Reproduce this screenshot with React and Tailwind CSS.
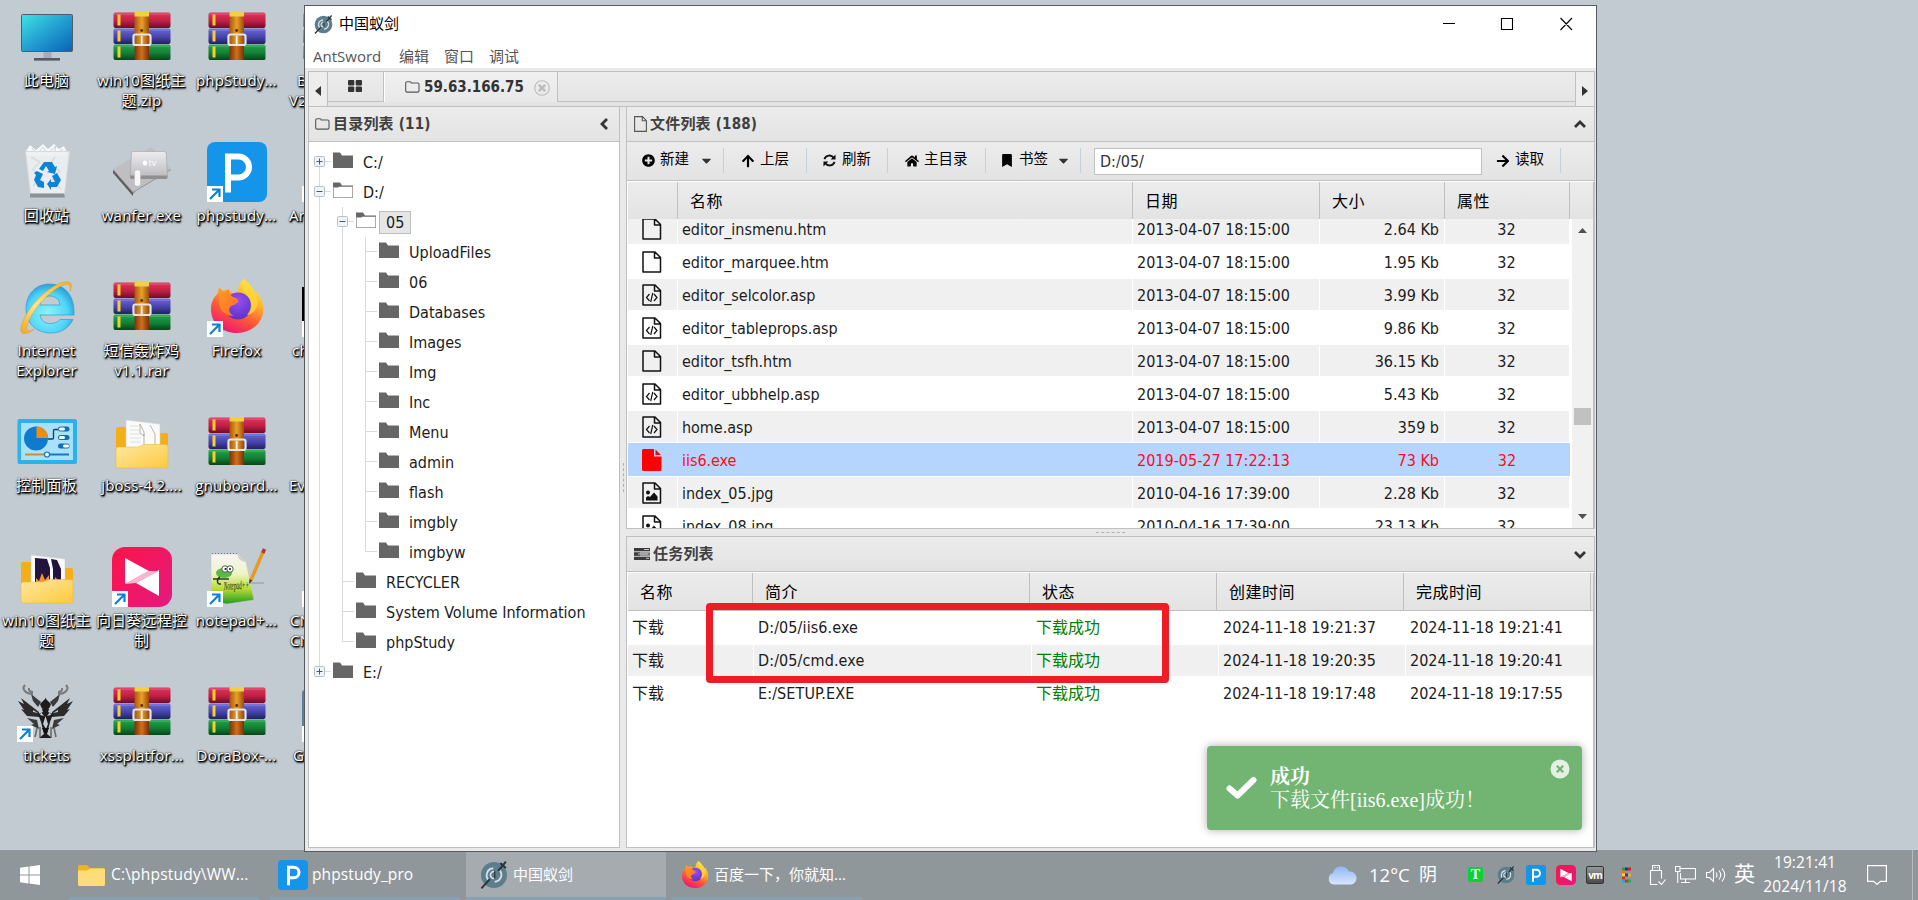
import React from "react";
import { FaPlusCircle, FaArrowUp, FaHome, FaBookmark, FaArrowRight, FaCaretDown } from "react-icons/fa";

const DUI = "font-[family-name:'DejaVu_Sans_Condensed','DejaVu_Sans','Noto_Sans_CJK_SC',sans-serif]";

/* ---------- desktop artwork ---------- */

function Rar() {
  const books = [
    { y: 13, a: "#e0355c", b: "#c01f45", c: "#6e0c26" },
    { y: 29, a: "#6a68d8", b: "#4644a8", c: "#232063" },
    { y: 44, a: "#25a548", b: "#128035", c: "#07451a" },
  ];
  return (
    <svg viewBox="0 0 60 60" className="size-[60px]">
      <defs>
        {books.map((k, i) => (
          <linearGradient key={i} id={"bk" + i} x1="0" y1="0" x2="0" y2="1">
            <stop offset="0" stopColor={k.a} />
            <stop offset="0.55" stopColor={k.b} />
            <stop offset="1" stopColor={k.c} />
          </linearGradient>
        ))}
        <linearGradient id="belt" x1="0" y1="0" x2="1" y2="0">
          <stop offset="0" stopColor="#a8560c" />
          <stop offset="0.5" stopColor="#e9a02a" />
          <stop offset="1" stopColor="#9a4c0a" />
        </linearGradient>
        <linearGradient id="belt2" x1="0" y1="0" x2="1" y2="0">
          <stop offset="0" stopColor="#7d3208" />
          <stop offset="0.5" stopColor="#d0701c" />
          <stop offset="1" stopColor="#7a3008" />
        </linearGradient>
      </defs>
      <rect x="2" y="51" width="57" height="2" rx="1" fill="#00000030" />
      {books.map((k, i) => (
        <g key={i}>
          <rect x="1.5" y={5.5 + i * 16} width="57" height="15.5" rx="2" fill={"url(#bk" + i + ")"} />
          <rect x="5.5" y={7.5 + i * 16} width="3" height="11" fill="#f5cf2c" />
          <rect x="2" y={6.5 + i * 16} width="56" height="1.2" fill="#ffffff30" />
        </g>
      ))}
      <rect x="22.5" y="5" width="14.5" height="34" fill="url(#belt)" />
      <rect x="22.5" y="5" width="14.5" height="4.5" fill="#f3cf45" />
      <rect x="22.5" y="37" width="14.5" height="16" fill="url(#belt2)" />
      <circle cx="29.7" cy="23.5" r="1.4" fill="#5c2c06" />
      <rect x="21.5" y="27.5" width="17" height="10.5" rx="2" fill="none" stroke="#e4e6ea" strokeWidth="2.2" />
      <path d="M29.7 29v8" stroke="#f1f2f5" strokeWidth="1.8" />
    </svg>
  );
}

function Monitor() {
  return (
    <svg viewBox="0 0 60 60" className="size-[60px]">
      <defs>
        <linearGradient id="mon" x1="0" y1="0" x2="1" y2="1">
          <stop offset="0" stopColor="#3fe3e6" />
          <stop offset="0.5" stopColor="#239fd2" />
          <stop offset="1" stopColor="#0763b5" />
        </linearGradient>
      </defs>
      <rect x="4.5" y="7.5" width="51" height="37" rx="1" fill="url(#mon)" stroke="#555b66" strokeWidth="1" />
      <rect x="26.5" y="45" width="8" height="7" fill="#a8abb8" />
      <rect x="17" y="51" width="26" height="2.6" fill="#555a68" />
    </svg>
  );
}

function Recycle() {
  return (
    <svg viewBox="0 0 60 60" className="size-[60px]">
      <path d="M9 9 13 3l6 5 7-6 5 5 6-5 5 5 5-3 3 6-1 4H9z" fill="#f6f8f9" />
      <path d="m15 6 5 6 6-7 4 7 9-8-2 9 9-6" fill="none" stroke="#cbd2d6" />
      <path d="M8.500 9.500h44L47.500 52h-34z" fill="#eef1f3" fillOpacity="0.9" stroke="#d5dadd" />
      <path d="m14 15 9 5-7 7 8 9-8 8m22-29-6 8 11 6-8 9 9 9" fill="none" stroke="#d6dcdf" strokeWidth="1.5" />
      <path d="M13 51.500h34l1 4H13z" fill="#8b9297" />
      <g fill="#0b84d8">
        <path d="m22 27 5-7 8 0 3 5 2-1-2 8-8-2 2-1-3-5-3 5z" />
        <path d="m20 29 6 3-3 6 4 2v6l-6-1-4-7 2-5-2-2z" />
        <path d="m30 42 4-5v3h4l-3-6 5-3 4 7-4 7h-6v3z" />
      </g>
    </svg>
  );
}

function AppleTv() {
  return (
    <svg viewBox="0 0 60 60" className="size-[60px]">
      <defs>
        <linearGradient id="atv" x1="0" y1="0" x2="0" y2="1">
          <stop offset="0" stopColor="#ededf0" />
          <stop offset="1" stopColor="#bcbcc0" />
        </linearGradient>
      </defs>
      <path d="M1 29 39 6 59 28 24 49 20 53z" fill="#8d8d8f" />
      <path d="M1 27 39 5 59 27 21 50z" fill="#bfbfc1" />
      <path d="m1 28 20 23v3L1 31z" fill="#5b5b5d" />
      <path d="M21 9.500h31q2 0 2.200 2L55.500 33q0 2-2 2H20q-2 0-1.800-2L19.500 11q.200-1.500 1.500-1.500z" fill="url(#atv)" stroke="#a2a2a6" strokeWidth="0.600" />
      <path d="M18 33.500h37.500v2q0 1.500-2 1.500H20q-2 0-2-1.500z" fill="#8f8f92" />
      <rect x="22.500" y="28" width="6" height="16" rx="2" fill="#f7f7f8" stroke="#b6b6b8" strokeWidth="0.500" />
      <ellipse cx="33" cy="21" rx="2.200" ry="2.500" fill="#fff" />
      <text x="36.500" y="24" fontSize="9" fontFamily="Open Sans" fill="#fff">tv</text>
    </svg>
  );
}

function PTile({ className }) {
  return (
    <svg viewBox="0 0 60 60" className={className}>
      <rect width="60" height="60" rx="8" fill="#1595e9" />
      <path d="M21 50.500V14.500h10.500a10.500 10.500 0 0 1 0 21H21" fill="none" stroke="#fff" strokeWidth="6" />
    </svg>
  );
}

function InternetExplorer() {
  return (
    <svg viewBox="0 0 60 60" className="size-[60px]">
      <defs>
        <radialGradient id="ie" cx="0.45" cy="0.6" r="0.6">
          <stop offset="0" stopColor="#8df3ff" />
          <stop offset="0.7" stopColor="#4ed4f8" />
          <stop offset="1" stopColor="#2b9fd9" />
        </radialGradient>
        <linearGradient id="ieRing" x1="0" y1="1" x2="1" y2="0">
          <stop offset="0" stopColor="#f0a81c" />
          <stop offset="0.4" stopColor="#ffe38a" />
          <stop offset="1" stopColor="#f5b21e" />
        </linearGradient>
      </defs>
      <path
        d="M32.500 7C47 7 57 18 57 34.500v3.500H23c1 6 5 8.500 10.500 8.500 4 0 7-1 9.500-4h13C52 51 44 56 34 56 19 56 9 46 9 32 9 17 19 7 32.500 7zM23 28h20c-.500-5.500-4.500-9-10-9s-9.500 3.500-10 9z"
        fill="url(#ie)"
        stroke="#3b9ac9"
        strokeWidth="0.700"
      />
      <path
        d="M8 40C3 49 2 56 7 56.500c3 .200 7-1.500 10-4-7 3-9 .500-6-7C16 33 30 16 44 9c8-4 10-1 9 5 3-7 1-10-5-9C35 7 16 24 8 40z"
        fill="url(#ieRing)"
        stroke="#d9921a"
        strokeWidth="0.400"
      />
    </svg>
  );
}

function Firefox({ className }) {
  return (
    <svg viewBox="0 0 60 60" className={className}>
      <defs>
        <linearGradient id="ff" x1="0.8" y1="0" x2="0.3" y2="1">
          <stop offset="0" stopColor="#fff04a" />
          <stop offset="0.35" stopColor="#ffb22e" />
          <stop offset="0.65" stopColor="#ff5a35" />
          <stop offset="1" stopColor="#ee1276" />
        </linearGradient>
        <radialGradient id="ffc" cx="0.5" cy="0.3" r="0.7">
          <stop offset="0" stopColor="#9a4df0" />
          <stop offset="1" stopColor="#5a33c8" />
        </radialGradient>
        <linearGradient id="fff" x1="0" y1="0" x2="1" y2="1">
          <stop offset="0" stopColor="#ff9a20" />
          <stop offset="1" stopColor="#ff6a2c" />
        </linearGradient>
      </defs>
      <path d="M37 2c5 4 9 9 12 15l1-2c4 5 6.500 11 6.500 17.500A26 24 0 0 1 30 56C15 56 4 46 4 32c0-7 3-12 7-16l1-6 4 4 5-2 6 5 4-3c0-5 2-9 6-12z" fill="url(#ff)" />
      <circle cx="31" cy="29" r="13.500" fill="url(#ffc)" />
      <path d="M13 11.500 17 16l5-4c-.200 4 1 6 4 8 4 1 6 3 5 5-2 3-6 3-8 5-2 3 0 7 4 9-9 0-15-6-15-14 0-5 1-9 1-13.500z" fill="url(#fff)" />
      <path d="M37 2c-4 8 0 12 4 17 4 6 4 13-1 19 9-2 13-10 9-21-3-6-7-11-12-15z" fill="#ffd93a" fillOpacity="0.750" />
    </svg>
  );
}

function ControlPanel() {
  return (
    <svg viewBox="0 0 60 60" className="size-[60px]">
      <rect x="0.500" y="7" width="59.500" height="45" rx="2" fill="#2bb1ec" />
      <rect x="4" y="11" width="52" height="37" fill="#a9e2f8" />
      <circle cx="19" cy="26.500" r="12" fill="#0f7bd0" />
      <path d="M19.500 26V14.500A11.500 11.500 0 0 1 31 26z" fill="#f08c13" />
      <path d="M31 27h4.500q1 0 1-1v-7.500q0-1 1-1H41" fill="none" stroke="#173e63" strokeWidth="1.300" />
      <g fill="#0f6fb8">
        <rect x="41" y="14.500" width="11.500" height="5" rx="2.500" />
        <rect x="41" y="23" width="11.500" height="5" rx="2.500" />
        <rect x="41" y="31.500" width="11.500" height="5" rx="2.500" />
      </g>
      <g fill="#fff">
        <rect x="42" y="15.500" width="6" height="3" rx="1.500" />
        <rect x="42" y="24" width="6" height="3" rx="1.500" />
        <rect x="46" y="32.500" width="6" height="3" rx="1.500" />
      </g>
      <path d="M8 42.500h22" stroke="#d8892c" strokeWidth="2" />
      <path d="M30 42.500h22" stroke="#1179c4" strokeWidth="2" />
      <circle cx="30" cy="42.500" r="2.500" fill="#fff" stroke="#1470b5" strokeWidth="1.200" />
    </svg>
  );
}

function Folder({ photos }) {
  return (
    <svg viewBox="0 0 60 60" className="size-[60px]">
      <defs>
        <linearGradient id="fold" x1="0" y1="0" x2="1" y2="1">
          <stop offset="0" stopColor="#fde7a2" />
          <stop offset="1" stopColor="#fdca3c" />
        </linearGradient>
      </defs>
      <path d="M4 17q0-2 2-2h14l5 6h29q2 0 2 2v20H4z" fill="#f4ae17" />
      <path d="m14 8 34 4v30H14z" fill="#fafafa" stroke="#d0d0d0" strokeWidth="0.600" />
      {photos ? (
        <g>
          <path d="m18 11 12 1 3 9v19H18z" fill="#21153f" />
          <path d="m34 12 6 1 4 9v18H36V22z" fill="#21153f" />
          <path d="M19 40v-9l3 3 3-8 3 7 4-5v12zM37 40l1-10 4 4v6z" fill="#f5922c" />
          <path d="m24 40 2-6 3 6z" fill="#ffd84a" />
        </g>
      ) : (
        <g fill="none" stroke="#a9a294" strokeWidth="0.800">
          <path d="m28 12 4 8v4l-4-3zM38 13l5 9v17M32 22v17" />
          <path d="M18 14h8M18 18h10M18 22h10M18 26h11M18 30h11" stroke="#d8d8d8" />
        </g>
      )}
      <path d="M4 38q0-3 2.500-3H26l6-2.500h22q2 0 2 2V54q0 2-2 2H6q-2 0-2-2z" fill="url(#fold)" stroke="#e9b437" strokeWidth="0.500" />
    </svg>
  );
}

function Sunlogin({ className }) {
  return (
    <svg viewBox="0 0 60 60" className={className}>
      <defs>
        <linearGradient id="sun" x1="0" y1="0" x2="1" y2="1">
          <stop offset="0" stopColor="#fd1448" />
          <stop offset="1" stopColor="#e21a80" />
        </linearGradient>
      </defs>
      <rect width="60" height="60" rx="13" fill="url(#sun)" />
      <path d="M13 11v26l24-13z" fill="#fff" />
      <path d="M47 49V23L24 36z" fill="#fff" />
      <path d="M13 37 36 24h11L24 36z" fill="#fbb4cf" />
    </svg>
  );
}

function Notepad() {
  return (
    <svg viewBox="0 0 60 60" className="size-[60px]">
      <defs>
        <linearGradient id="np" x1="0" y1="0" x2="0" y2="1">
          <stop offset="0" stopColor="#f6f6f6" />
          <stop offset="0.4" stopColor="#eef4c6" />
          <stop offset="0.7" stopColor="#b6dc35" />
          <stop offset="1" stopColor="#1f9a22" />
        </linearGradient>
      </defs>
      <path d="M4 7h27l8 8 8 38-27 4-16-2z" fill="url(#np)" stroke="#c9c9c9" strokeWidth="0.600" />
      <path d="M30 7q2 8 9 8z" fill="#cfcfcf" />
      <path d="M5 6.500h26" stroke="#777" strokeWidth="1.200" strokeDasharray="1 2" />
      <ellipse cx="17" cy="26" rx="8" ry="5" fill="#59b847" />
      <path d="M6 32h16M13 30c-4 2-3 8 1 7" fill="none" stroke="#2d3a24" strokeWidth="1.500" />
      <circle cx="18" cy="22" r="3.200" fill="#fff" stroke="#333" strokeWidth="0.800" />
      <circle cx="23" cy="22" r="3.200" fill="#fff" stroke="#333" strokeWidth="0.800" />
      <circle cx="18.500" cy="22" r="1" fill="#111" />
      <circle cx="23" cy="22" r="1" fill="#111" />
      <text x="17" y="43" fontSize="12" fontStyle="italic" fontFamily="Liberation Serif" fill="#222" textLength="25" lengthAdjust="spacingAndGlyphs" transform="rotate(-3 17 43)">Notepad++</text>
      <path d="M56 5 44 33" stroke="#e69b1e" strokeWidth="3.500" />
      <path d="M57.500 2 55.800 6" stroke="#b03838" strokeWidth="3.500" />
      <path d="m42.600 32 2.800 1.400-3.400 3.400z" fill="#333" />
      <path d="M42 36h15" stroke="#00000022" strokeWidth="2" />
    </svg>
  );
}

function Dragon() {
  const half = (
    <g>
      <path d="M22 30 4 16l3 6-6-3 6 9-3-1 6 7 12 1z" fill="#2c2b2b" />
      <path d="M24 20 14 12l2 7 5 6zM20 38l-10-2 7 6-3 1 8 4z" fill="#3b3a3a" />
      <path d="M16 12C9 12 4 7 8 3m4 3c-1 3 2 4 4 4" fill="none" stroke="#77797b" strokeWidth="2" />
      <path d="m29 16-6 6 3 8-5 2 3 8 3 12-5 4 7 0z" fill="#1d1b1b" />
      <path d="m20 46-2 9m5-10 0 10" stroke="#6a6a6b" strokeWidth="1.600" />
    </g>
  );
  return (
    <svg viewBox="0 0 60 60" className="size-[60px]">
      {half}
      <g transform="translate(57 0) scale(-1 1)">{half}</g>
      <path d="m24 30 3 4-4-1zM33 30l-3 4 4-1zM26 42l2.500-8 2.500 8-2 5zM22 24l4 3-3 0zM35 24l-4 3 3 0zM16 28l5 3-5-1zM41 28l-5 3 5-1z" fill="#c1cbd1" />
      <path d="M25 46h7l-2 5h-3z" fill="#111" />
    </svg>
  );
}

function AntLogo({ className }) {
  return (
    <svg viewBox="0 0 20 20" className={className}>
      <circle cx="10" cy="10" r="9.300" fill="#5e7d8c" />
      <path d="M6 13.500a5 5 0 0 1 3.500-8.300M14 6.500a5 5 0 0 1-3.500 8.300" fill="none" stroke="#d7e0e4" strokeWidth="1.300" />
      <path d="M10 7.500a2.300 2.300 0 0 0 0 5" fill="none" stroke="#d7e0e4" strokeWidth="1.200" />
      <path d="M10.500 7.500v5" stroke="#2b3a42" strokeWidth="1" />
      <path d="M1 19.500 7 13M13 7l5.500-6.500M14.500 1.500l4 3.500" stroke="#27343b" strokeWidth="1.400" />
    </svg>
  );
}

function Shortcut() {
  return (
    <svg viewBox="0 0 16 16" className="absolute bottom-0 left-0 size-[16px]">
      <rect width="16" height="16" fill="#fff" />
      <path d="M3 13 11.500 4.500M5 3.500h7.500V11" fill="none" stroke="#0c80d8" strokeWidth="2.200" />
    </svg>
  );
}

const columns = [
  [
    { icon: <Monitor />, label: ["此电脑"] },
    { icon: <Recycle />, label: ["回收站"] },
    { icon: <InternetExplorer />, label: ["Internet", "Explorer"] },
    { icon: <ControlPanel />, label: ["控制面板"] },
    { icon: <Folder photos />, label: ["win10图纸主", "题"] },
    { icon: <Dragon />, label: ["tickets"], link: true },
  ],
  [
    { icon: <Rar />, label: ["win10图纸主", "题.zip"] },
    { icon: <AppleTv />, label: ["wanfer.exe"] },
    { icon: <Rar />, label: ["短信轰炸鸡", "v1.1.rar"] },
    { icon: <Folder />, label: ["jboss-4.2...."] },
    { icon: <Sunlogin className="size-[60px]" />, label: ["向日葵远程控", "制"], link: true },
    { icon: <Rar />, label: ["xssplatfor..."] },
  ],
  [
    { icon: <Rar />, label: ["phpStudy..."] },
    { icon: <PTile className="size-[60px]" />, label: ["phpstudy..."], link: true },
    { icon: <Firefox className="size-[60px]" />, label: ["Firefox"], link: true },
    { icon: <Rar />, label: ["gnuboard..."] },
    { icon: <Notepad />, label: ["notepad+..."], link: true },
    { icon: <Rar />, label: ["DoraBox-..."] },
  ],
];

const fourth = [
  { icon: <Rar />, label: ["B", "V2"], pad: ["pl-[13px]", "pl-[5px]"] },
  { icon: null, label: ["Ar"], pad: ["pl-[5px]"], link: true },
  { icon: <div className="h-[40px] w-full bg-black" />, label: ["ch"], pad: ["pl-[8px]"], link: true },
  { icon: null, label: ["Ev"], pad: ["pl-[5px]"] },
  { icon: null, label: ["CN", "CN"], pad: ["pl-[6px]", "pl-[6px]"], link: true },
  { icon: <div className="h-[44px] w-full rounded-[3px] bg-[#5e7f9c]" />, label: ["G"], pad: ["pl-[9px]"], link: true },
];

const labelText =
  "text-[15px] leading-[20px] tracking-[0.2px] whitespace-nowrap text-white [text-shadow:1px_1px_1px_#000,1px_1px_2px_#000,0_0_2px_#000,1px_2px_2px_#000a]";

function DesktopItem({ item }) {
  return (
    <div className="flex h-[135px] w-[95px] flex-col items-center">
      <div className="relative flex size-[60px] items-center justify-center">
        {item.icon}
        {item.link && <Shortcut />}
      </div>
      <div className="mt-[3px] flex w-full flex-col">
        {item.label.map((t, i) => (
          <span key={i} className={(item.pad ? item.pad[i] : "text-center") + " " + labelText}>
            {t}
          </span>
        ))}
      </div>
    </div>
  );
}

/* ---------- small window glyphs ---------- */

function FolderOutline() {
  return (
    <svg viewBox="0 0 15 12" className="h-[12px] w-[15px] shrink-0">
      <path d="M.700 2q0-1.300 1.300-1.300h3q1.200 0 1.200 1.300h6.500q1.300 0 1.300 1.300v6.500q0 1.300-1.300 1.300H2Q.700 11.100.700 9.800z" fill="none" stroke="#555" strokeWidth="1.100" />
    </svg>
  );
}

function FileOutline() {
  return (
    <svg viewBox="0 0 13 16" className="h-[16px] w-[13px] shrink-0">
      <path d="M.600.600h7.900l3.900 4v10.800H.600zM8.300.800v4h4" fill="none" stroke="#555" strokeWidth="1.100" />
    </svg>
  );
}

function FileGlyph({ kind }) {
  if (kind === "red")
    return (
      <svg viewBox="0 0 20 22" className="h-[22px] w-[20px]">
        <path d="M1.500 0H12v7.500h7.500v13q0 1.500-1.500 1.500H1.500Q0 22 0 20.500v-19Q0 0 1.500 0zM13.500.500l5.500 5.500h-5.500z" fill="#f00" />
      </svg>
    );
  return (
    <svg viewBox="0 0 20 22" className="h-[22px] w-[20px]">
      <path d="M1 1h12l5.500 5.500V21H1zM12.500 1v6h6" fill="none" stroke="#111" strokeWidth="1.500" strokeLinejoin="round" />
      {kind === "asp" && <path d="m7.500 10-3 3.500 3 3.500M12 10l3 3.500-3 3.500M10.800 8.800 8.700 18" fill="none" stroke="#111" strokeWidth="1.200" />}
      {kind === "jpg" && (
        <g fill="#111">
          <circle cx="6" cy="10.500" r="2" />
          <path d="M4 18.500v-3l2-1.500 2 1 4-4.500 3.500 4v4z" />
        </g>
      )}
    </svg>
  );
}

function TreeFolder({ open }) {
  return (
    <svg viewBox="0 0 20 16" className="h-[16px] w-[20px] shrink-0">
      <path d="M0 .500h7l2 3h11V16H0z" fill="#666" />
      {open && <path d="M1 5.500h4l1.500-.800H19V15H1z" fill="#fff" />}
      {open && <path d="M.500 5v10.500h19V4.500" fill="none" stroke="#aaa" />}
    </svg>
  );
}

function TreeCell({ kind }) {
  const up = kind !== "none" && kind !== "plusTop";
  const down = !["none", "end", "plusEnd"].includes(kind);
  const box = kind.startsWith("plus") || kind.startsWith("minus");
  const stub = box || kind === "tee" || kind === "end";
  return (
    <svg viewBox="0 0 23 30" className="h-[30px] w-[23px] shrink-0">
      <g stroke="#dadada">
        {up && <path d="M10.500 0v15" />}
        {down && <path d="M10.500 15v15" />}
        {stub && <path d="M10 14.500h12" />}
      </g>
      {box && (
        <g>
          <rect x="5.500" y="9.500" width="10" height="10" rx="1" fill="#f0f4f7" stroke="#b5c0c9" />
          <path d="M7.500 14.500h6" stroke="#47596a" />
          {kind.startsWith("plus") && <path d="M10.500 11.500v6" stroke="#47596a" />}
        </g>
      )}
    </svg>
  );
}

const tree = [
  { cells: ["plusTop"], name: "C:/" },
  { cells: ["minus"], name: "D:/", open: true },
  { cells: ["line", "minus"], name: "05", open: true, selected: true },
  ...["UploadFiles", "06", "Databases", "Images", "Img", "Inc", "Menu", "admin", "flash", "imgbly"].map((name) => ({
    cells: ["line", "line", "tee"],
    name,
  })),
  { cells: ["line", "line", "end"], name: "imgbyw" },
  { cells: ["line", "tee"], name: "RECYCLER" },
  { cells: ["line", "tee"], name: "System Volume Information" },
  { cells: ["line", "end"], name: "phpStudy" },
  { cells: ["plusEnd"], name: "E:/" },
];

const d13 = "2013-04-07 18:15:00";
const d10 = "2010-04-16 17:39:00";
const files = [
  ["htm", "editor_insmenu.htm", d13, "2.64 Kb"],
  ["htm", "editor_marquee.htm", d13, "1.95 Kb"],
  ["asp", "editor_selcolor.asp", d13, "3.99 Kb"],
  ["asp", "editor_tableprops.asp", d13, "9.86 Kb"],
  ["htm", "editor_tsfh.htm", d13, "36.15 Kb"],
  ["asp", "editor_ubbhelp.asp", d13, "5.43 Kb"],
  ["asp", "home.asp", d13, "359 b"],
  ["red", "iis6.exe", "2019-05-27 17:22:13", "73 Kb"],
  ["jpg", "index_05.jpg", d10, "2.28 Kb"],
  ["jpg", "index_08.jpg", d10, "23.13 Kb"],
];

const tasks = [
  ["D:/05/iis6.exe", "2024-11-18 19:21:37", "2024-11-18 19:21:41"],
  ["D:/05/cmd.exe", "2024-11-18 19:20:35", "2024-11-18 19:20:41"],
  ["E:/SETUP.EXE", "2024-11-18 19:17:48", "2024-11-18 19:17:55"],
];

const grad = "bg-linear-to-b from-[#ececec] to-[#e3e3e3]";

function HeadCell({ className, children }) {
  return (
    <div className={"flex items-center border-r border-[#c0c0c0] pt-[2px] pl-[12px] text-[16px] tracking-[0.5px] text-black " + className}>
      {children}
    </div>
  );
}

function Chevron({ d, className }) {
  return (
    <svg viewBox="0 0 12 12" className={"size-[12px] " + className}>
      <path d={d} fill="none" stroke="#333" strokeWidth="2.800" />
    </svg>
  );
}

function PanelHead({ icon, title, chevron, className }) {
  return (
    <div className={"flex h-[35px] shrink-0 items-center border-b border-[#c0c0c0] pl-[6px] " + grad + " " + (className || "")}>
      {icon}
      <span className="ml-[3px] text-[15px] font-bold tracking-[0.2px] whitespace-nowrap text-[#404040]">{title}</span>
      <div className="grow" />
      {chevron}
    </div>
  );
}

function Sep({ className }) {
  return <div className={"-mt-px h-[25px] w-px shrink-0 bg-[#c2d2dd] " + className} />;
}

function Word({ className, children }) {
  return <span className={"pb-[2px] " + className}>{children}</span>;
}

function FileRow({ row, index }) {
  const [kind, name, date, size] = row;
  const sel = kind === "red";
  const bg = index % 2 === 0 ? "bg-[#f0f0f0]" : "bg-white";
  const cell = sel ? "flex items-center border-r border-transparent" : "my-px flex items-center border-r border-white " + bg;
  return (
    <div className={"flex h-[33px] shrink-0 " + (sel ? "w-[942px] bg-[#b5d5ff] text-[#fb0d1b]" : "w-[941px] text-[#1c1c1c]")}>
      <div className={cell + " w-[50px] pl-[14px]"}>
        <FileGlyph kind={kind} />
      </div>
      <div className={cell + " w-[455px] pt-[2px] pl-[4px] tracking-[-0.03px]"}>{name}</div>
      <div className={cell + " w-[187px] pt-[2px] pl-[4px]"}>{date}</div>
      <div className={cell + " w-[125px] justify-end pt-[2px] pr-[5px]"}>{size}</div>
      <div className={cell + " grow justify-center border-r-0 pt-[2px] pr-px"}>32</div>
    </div>
  );
}

function AntSword() {
  return (
    <div className="absolute top-[5px] left-[304px] flex h-[847px] w-[1293px] flex-col border border-[#555b5f] bg-[#e9e9e9]">
      {/* title bar */}
      <div className="flex h-[38px] shrink-0 items-center bg-white pb-[2px] pl-[9px]">
        <AntLogo className="size-[19px]" />
        <span className="ml-[6px] text-[15px] text-black">中国蚁剑</span>
        <div className="grow" />
        <svg viewBox="0 0 130 14" className="mr-[23px] h-[14px] w-[130px]">
          <g fill="none" stroke="#000" strokeWidth="1.100">
            <path d="M0 6.500h12M58.500 1.500h11v11h-11zM117.500 1l11.500 12M129 1l-11.500 12" />
          </g>
        </svg>
      </div>
      {/* menu */}
      <div className="flex h-[24px] shrink-0 gap-[16px] bg-white pt-px pl-[8px] text-[15px] leading-[23px] whitespace-nowrap text-[#555] font-[family-name:'Open_Sans','Noto_Sans_CJK_SC',sans-serif]">
        <span className="w-[70px]">AntSword</span>
        <span className="w-[29px]">编辑</span>
        <span className="w-[29px]">窗口</span>
        <span className="w-[30px]">调试</span>
      </div>
      {/* workspace */}
      <div className="mt-[3px] mr-px mb-[3px] ml-[3px] flex min-h-0 grow flex-col">
        <div className={"flex h-[36px] shrink-0 border border-[#c0c0c0] " + grad}>
          <div className="flex w-[19px] items-center border-r border-[#c0c0c0] bg-[#ededed] pt-[3px] pl-[6px]">
            <svg viewBox="0 0 6 10" className="h-[10px] w-[6px]"><path d="M6 0v10L0 5z" fill="#333" /></svg>
          </div>
          <div className="flex h-[30px] w-[56px] justify-center border-r border-b border-[#c0c0c0] pt-[8px] pr-px">
            <svg viewBox="0 0 14 12" className="h-[12px] w-[14px]">
              <g fill="#333">
                <rect width="6.300" height="5.400" rx="1" />
                <rect x="7.700" width="6.300" height="5.400" rx="1" />
                <rect y="6.600" width="6.300" height="5.400" rx="1" />
                <rect x="7.700" y="6.600" width="6.300" height="5.400" rx="1" />
              </g>
            </svg>
          </div>
          <div className="flex h-[30px] w-[174px] items-center border-x border-x-white border-r-[#c0c0c0] bg-linear-to-b from-[#f0f0f0] to-[#e8e8e8] pl-[20px]">
            <FolderOutline />
            <span className="ml-[4px] w-[110px] text-[15px] font-bold text-[#333]">59.63.166.75</span>
            <svg viewBox="0 0 16 16" className="mt-[2px] size-[16px]">
              <circle cx="8" cy="8" r="7.300" fill="none" stroke="#bcbcbc" strokeWidth="1.100" />
              <path d="m4.800 4.800 6.400 6.400M11.200 4.800l-6.400 6.400" stroke="#bcbcbc" strokeWidth="2.500" />
            </svg>
          </div>
          <div className="h-[30px] grow border-b border-[#c0c0c0]" />
          <div className="flex w-[19px] items-center border-l border-[#c0c0c0] bg-[#ededed] pt-[3px] pl-[6px]">
            <svg viewBox="0 0 6 10" className="h-[10px] w-[6px]"><path d="M0 0v10l6-5z" fill="#333" /></svg>
          </div>
        </div>
        <div className="flex min-h-0 grow">
          {/* directory tree */}
          <div className="flex w-[312px] shrink-0 flex-col border border-t-0 border-[#c0c0c0] bg-white">
            <PanelHead
              icon={<FolderOutline />}
              title="目录列表 (11)"
              chevron={<Chevron d="M9 1 4 6l5 5" className="mr-[9px]" />}
            />
            <div className="flex flex-col pt-[5px]">
              {tree.map((n) => (
                <div key={n.name} className="flex h-[30px] items-center text-[16px] text-[#1c1c1c]">
                  {n.cells.map((c, i) => (
                    <TreeCell key={i} kind={c} />
                  ))}
                  <div className="mt-[-4px] ml-px"><TreeFolder open={n.open} /></div>
                  {n.selected ? (
                    <span className="ml-[3px] flex h-[23px] items-center border border-[#bdbdbd] bg-[#e6e6e6] px-[6px] pt-px">{n.name}</span>
                  ) : (
                    <span className="ml-[10px] pt-[2px] whitespace-nowrap">{n.name}</span>
                  )}
                </div>
              ))}
            </div>
          </div>
          <div className="flex w-[6px] flex-col items-center justify-center">
            <div className="h-[29px] w-0 border-l border-dashed border-[#b0b0b0]" />
          </div>
          {/* right side */}
          <div className="flex min-w-0 grow flex-col">
            <div className="flex h-[422px] flex-col border border-t-0 border-[#c0c0c0] bg-white">
              <PanelHead
                icon={<span className="ml-px"><FileOutline /></span>}
                title="文件列表 (188)"
                chevron={<Chevron d="M1 9l5-5 5 5" className="mr-[8px]" />}
              />
              <div className={"flex h-[39px] shrink-0 items-center border-b border-[#c0c0c0] pb-[1px] pl-[15px] text-[14.5px] whitespace-nowrap text-black " + grad}>
                <FaPlusCircle className="size-[13px]" />
                <Word className="ml-[5px] w-[29px]">新建</Word>
                <FaCaretDown className="ml-[12px] h-[15px] w-[11px] text-[#333]" />
                <Sep className="ml-[11px]" />
                <FaArrowUp className="ml-[17px] size-[14px]" />
                <Word className="ml-[5px] w-[29px]">上层</Word>
                <Sep className="ml-[17px]" />
                <svg viewBox="0 0 14 14" className="ml-[16px] size-[13px]">
                  <path d="M1.500 5.500a5.700 5.700 0 0 1 10-1.500M12.500 8.500a5.700 5.700 0 0 1-10 1.500" fill="none" stroke="#111" strokeWidth="2" />
                  <path d="M13.500.500v5.300H8.200zM.500 13.500V8.200h5.300z" fill="#111" />
                </svg>
                <Word className="ml-[6px] w-[29px]">刷新</Word>
                <Sep className="ml-[16px]" />
                <FaHome className="ml-[17px] size-[14px]" />
                <Word className="ml-[5px] w-[44px]">主目录</Word>
                <Sep className="ml-[17px]" />
                <FaBookmark className="ml-[15px] h-[13px] w-[12px]" />
                <Word className="ml-[6px] w-[29px]">书签</Word>
                <FaCaretDown className="ml-[10px] h-[15px] w-[11px] text-[#333]" />
                <Sep className="ml-[11px]" />
                <div className="mt-[2px] ml-[13px] flex h-[27px] w-[388px] items-center border border-[#c0c0c0] bg-white pt-px pl-[5px] text-[16px] text-[#333]">D:/05/</div>
                <FaArrowRight className="ml-[14px] size-[14px]" />
                <Word className="ml-[5px] w-[30px]">读取</Word>
                <Sep className="ml-[15px]" />
              </div>
              <div className="mt-px ml-px flex min-h-0 grow flex-col border-r border-[#c0c0c0]">
                <div className={"flex h-[37px] shrink-0 " + grad}>
                  <HeadCell className="w-[50px]" />
                  <HeadCell className="w-[455px]">名称</HeadCell>
                  <HeadCell className="w-[187px]">日期</HeadCell>
                  <HeadCell className="w-[125px]">大小</HeadCell>
                  <HeadCell className="w-[125px]">属性</HeadCell>
                </div>
                <div className="flex min-h-0 grow overflow-hidden">
                  <div className="-mt-[7px] flex w-[944px] shrink-0 flex-col text-[16px]">
                    {files.map((f, i) => (
                      <FileRow key={f[1]} row={f} index={i} />
                    ))}
                  </div>
                  <div className="flex w-[21px] flex-col items-center bg-[#f1f1f1] pt-[9px] pb-[9px]">
                    <svg viewBox="0 0 9 5" className="h-[5px] w-[9px]"><path d="M0 5 4.500 0 9 5z" fill="#505050" /></svg>
                    <div className="mt-[175px] size-[17px] bg-[#c1c1c1]" />
                    <div className="grow" />
                    <svg viewBox="0 0 9 5" className="h-[5px] w-[9px]"><path d="M0 0l4.500 5L9 0z" fill="#505050" /></svg>
                  </div>
                </div>
              </div>
            </div>
            <div className="flex h-[7px] shrink-0 items-center justify-center">
              <div className="w-[29px] border-t border-dashed border-[#b0b0b0]" />
            </div>
            <div className="flex min-h-0 grow flex-col border border-[#c0c0c0] bg-white">
              <PanelHead
                icon={
                  <svg viewBox="0 0 16 12" className="ml-px h-[12px] w-[16px]">
                    <rect width="16" height="3.300" fill="#3a3a3a" />
                    <rect y="4.400" width="16" height="3.300" fill="#777" />
                    <rect y="4.400" width="6" height="3.300" fill="#3a3a3a" />
                    <rect y="8.700" width="16" height="3.300" fill="#3a3a3a" />
                    <path d="M10 1.500h5M12 10.300h3M4 6h10" stroke="#ddd" strokeWidth="0.900" />
                  </svg>
                }
                title="任务列表"
                chevron={<Chevron d="M1 3l5 5 5-5" className="mt-[2px] mr-[8px]" />}
              />
              <div className="mt-px ml-px flex min-h-0 grow flex-col border-r border-[#c0c0c0]">
                <div className={"flex h-[38px] shrink-0 border-b border-[#c0c0c0] " + grad}>
                  <HeadCell className="w-[125px]">名称</HeadCell>
                  <HeadCell className="w-[277px]">简介</HeadCell>
                  <HeadCell className="w-[187px]">状态</HeadCell>
                  <HeadCell className="w-[187px]">创建时间</HeadCell>
                  <HeadCell className="w-[187px]">完成时间</HeadCell>
                </div>
                {tasks.map((t, i) => {
                  const c = "my-px flex items-center border-r border-white pl-[4px] " + (i === 1 ? "bg-[#f0f0f0]" : "bg-white");
                  return (
                    <div key={t[0]} className="flex h-[33px] shrink-0 text-[16px] text-[#1c1c1c]">
                      <div className={c + " w-[126px]"}>下载</div>
                      <div className={c + " w-[278px] tracking-[0.100px]"}>{t[0]}</div>
                      <div className={c + " w-[187px] text-[#008000]"}>下载成功</div>
                      <div className={c + " w-[187px]"}>{t[1]}</div>
                      <div className={c + " grow border-r-0"}>{t[2]}</div>
                    </div>
                  );
                })}
              </div>
            </div>
          </div>
        </div>
      </div>
    </div>
  );
}

function Toast() {
  return (
    <div className="absolute top-[746px] left-[1207px] flex h-[84px] w-[375px] items-center rounded-[4px] bg-[#72b572] pl-[19px] text-[20px] leading-[23px] text-white shadow-[0_0_10px_#0005] font-[family-name:'Liberation_Serif','Noto_Serif_CJK_SC','Noto_Sans_CJK_SC',serif]">
      <svg viewBox="0 0 31 24" className="h-[24px] w-[31px]">
        <path d="m3.500 12.500 8 7L27.500 4" fill="none" stroke="#fff" strokeWidth="6" strokeLinecap="round" strokeLinejoin="round" />
      </svg>
      <div className="mt-[2px] ml-[13px] flex flex-col">
        <span className="font-bold">成功</span>
        <span className="whitespace-nowrap">下载文件[iis6.exe]成功！</span>
      </div>
      <svg viewBox="0 0 20 20" className="absolute top-[13px] right-[12px] size-[20px]">
        <circle cx="10" cy="10" r="9.500" fill="#e3f0e3" />
        <path d="m6.800 6.800 6.400 6.400M13.200 6.800l-6.400 6.400" stroke="#72b572" strokeWidth="2.200" />
      </svg>
    </div>
  );
}

function Task({ icon, label, className, active }) {
  return (
    <div className={"flex items-center border-b-[3px] border-[#84a2b4] pt-[3px] whitespace-nowrap " + (active ? "bg-[#a6abaf] " : "") + className}>
      {icon}
      <span>{label}</span>
    </div>
  );
}

function Taskbar() {
  return (
    <div className="absolute bottom-0 left-0 flex h-[50px] w-full bg-[#90979b] text-[15.500px] text-white">
      <svg viewBox="0 0 20 20" className="mt-[15px] mr-[29px] ml-[20px] size-[20px]">
        <path d="M0 2.800 8.500 1.600v7.900H0zM9.500 1.500 20 0v9.500H9.500zM0 10.500h8.500v7.900L0 17.200zM9.500 10.500H20V20L9.500 18.500z" fill="#fff" />
      </svg>
      <Task
        className="w-[190px] pl-[9px]"
        label={<span className="ml-[6px] text-[15.500px] tracking-[0.200px]">C:\phpstudy\WW...</span>}
        icon={
          <svg viewBox="0 0 27 21" className="h-[21px] w-[27px]">
            <path d="M0 1.500Q0 0 1.500 0H9l3 3h13.500Q27 3 27 4.500V10H0z" fill="#f5b11d" />
            <path d="M0 5.500h9L12 3.500h13.500Q27 3.500 27 5v14.500q0 1.500-1.500 1.500h-24Q0 21 0 19.500z" fill="#fddc7c" />
          </svg>
        }
      />
      <Task className="ml-[11px] w-[190px] pl-[8px]" icon={<PTile className="size-[30px]" />} label={<span className="ml-[4px] tracking-[0.100px]">phpstudy_pro</span>} />
      <Task active className="ml-[6px] w-[200px] pl-[14px]" icon={<AntLogo className="size-[28px]" />} label={<span className="ml-[5px] text-[15px]">中国蚁剑</span>} />
      <Task className="ml-[6px] w-[190px] pl-[8px]" icon={<Firefox className="size-[30px]" />} label={<span className="ml-[4px] text-[15px]">百度一下，你就知...</span>} />
      <div className="grow" />
      <div className="mr-[31px] flex items-center pb-[1px]">
        <svg viewBox="0 0 30 20" className="h-[20px] w-[30px]">
          <defs>
            <linearGradient id="cl" x1="0" y1="0" x2="0" y2="1">
              <stop offset="0" stopColor="#8fb7f5" />
              <stop offset="1" stopColor="#d9e6ff" />
            </linearGradient>
          </defs>
          <path d="M6 19.500a6 6 0 0 1 0-11.500A8.500 8.500 0 0 1 22 6.500a6.500 6.500 0 0 1 2 13z" fill="url(#cl)" />
        </svg>
        <span className="ml-[12px] w-[39px] text-[18.500px] whitespace-nowrap">12°C</span>
        <span className="ml-[11px] w-[18px] text-[18px]">阴</span>
        <div className="ml-[31px] flex size-[15px] items-center justify-center rounded-[2px] bg-[#0ad03a] font-[family-name:'Liberation_Serif',serif] text-[14px] leading-none font-bold">T</div>
        <AntLogo className="ml-[14px] size-[18px]" />
        <PTile className="ml-[11px] size-[20px]" />
        <Sunlogin className="ml-[10px] size-[20px]" />
        <div className="ml-[10px] flex h-[18px] w-[18px] items-center justify-center rounded-[2px] border border-[#333] bg-linear-to-b from-[#999] to-[#4a4a4a] text-[10px] leading-none font-bold tracking-[-1px]">vm</div>
        <svg viewBox="0 0 9 15" className="ml-[18px] h-[16px] w-[9px]">
          <g>
            <path d="M0 0h3v3H0z" fill="#2c9a3a" /><path d="M3 0h3v3H3z" fill="#1030c8" /><path d="M6 0h3v3H6z" fill="#d02020" />
            <path d="M0 3h3v3H0z" fill="#f07020" /><path d="M0 6h3v3H0z" fill="#e8e020" /><path d="M3 6h3v3H3z" fill="#5a20c0" /><path d="M6 6h3v3H6z" fill="#e8b020" />
            <path d="M0 9h3v3H0z" fill="#e02828" /><path d="M0 12h3v3H0z" fill="#20a8d8" /><path d="M3 12h3v3H3z" fill="#d82c20" /><path d="M6 12h3v3H6z" fill="#20b050" />
          </g>
        </svg>
        <svg viewBox="0 0 17 22" className="ml-[18px] h-[22px] w-[17px]">
          <g fill="none" stroke="#fff" strokeWidth="1.100">
            <path d="M3.500 6.500v-5h7v5M1.500 6.500h11v8M1.500 6.500v14h7M5 3.500h1.500M8 3.500h1M9.500 17.500l3 3 4-5" />
          </g>
        </svg>
        <svg viewBox="0 0 21 18" className="ml-[9px] h-[18px] w-[21px]">
          <g fill="none" stroke="#fff" strokeWidth="1.100">
            <path d="M5.500 2.500h15v10.500h-15v-6M.500.500h4.500v5H.500zM2.700 5.500v11.500M6 16.500h9M10.500 13v3.500" />
          </g>
        </svg>
        <svg viewBox="0 0 21 16" className="ml-[10px] h-[16px] w-[21px]">
          <g fill="none" stroke="#fff" strokeWidth="1.100">
            <path d="M.500 5.500h3l4-4v13l-4-4h-3zM10 5.500q2 2.500 0 5M13 3.500q3.500 4.500 0 9M16 1.500q5.500 6.500 0 13" />
          </g>
        </svg>
        <span className="ml-[7px] w-[22px] pb-px text-[21px]">英</span>
        <div className="ml-[7px] flex w-[84px] flex-col items-center text-[15.500px] leading-[23.500px] tracking-[0.100px] whitespace-nowrap">
          <span>19:21:41</span>
          <span>2024/11/18</span>
        </div>
        <svg viewBox="0 0 20 20" className="ml-[20px] size-[20px]">
          <path d="M.600.600h18.800v15.800h-6l-3.400 3-3.400-3h-6z" fill="none" stroke="#fff" strokeWidth="1.200" />
        </svg>
      </div>
      <div className="absolute top-0 right-[5px] h-full w-px bg-[#b4babd]" />
    </div>
  );
}

export default function App() {
  return (
    <div className="relative h-[900px] w-[1918px] overflow-hidden bg-[#c1cbd1] font-[family-name:'Open_Sans','Noto_Sans_CJK_SC',sans-serif]">
      <div className="-ml-px flex pt-[7px]">
        {[...columns, fourth].map((col, i) => (
          <div key={i} className="flex flex-col">
            {col.map((item, j) => (
              <DesktopItem key={j} item={item} />
            ))}
          </div>
        ))}
      </div>
      <Taskbar />
      <div className={DUI}>
        <AntSword />
      </div>
      <Toast />
      <div className="absolute top-[603px] left-[706px] h-[80px] w-[463px] rounded-[4px] border-[7px] border-[#ee1c24]" />
    </div>
  );
}
